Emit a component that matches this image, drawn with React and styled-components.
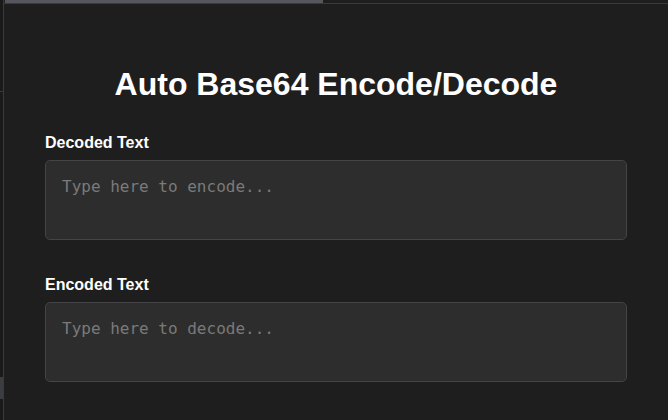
import React from "react";
import styled, { createGlobalStyle } from "styled-components";

const Global = createGlobalStyle`
  html, body { margin: 0; padding: 0; background: #1e1e1e; height: 100%; overflow: hidden; }
  #root { height: 100%; }
  * { box-sizing: border-box; }
`;

const Frame = styled.div`
  display: flex;
  height: 420px;
  width: 668px;
  background: #1e1e1e;
  font-family: "Liberation Sans", Arial, sans-serif;
  color: #ffffff;
`;

const Rail = styled.div`
  width: 4px;
  flex: none;
  background: #1a1a1a;
  border-right: 1px solid #3a3a3c;
  display: flex;
  flex-direction: column;
`;

const RailGap = styled.div`
  height: ${(p) => p.$h}px;
  flex: none;
  border-bottom: ${(p) => (p.$line ? "1px solid #3a3a3c" : "none")};
`;

const RailThumb = styled.div`
  height: 22px;
  flex: none;
  background: #3c3d40;
`;

const Main = styled.div`
  flex: 1;
  display: flex;
  flex-direction: column;
  min-width: 0;
`;

const TopStrip = styled.div`
  height: 4px;
  flex: none;
  display: flex;
  border-bottom: 1px solid #3a3a3c;
`;

const TopThumb = styled.div`
  width: 318px;
  margin-left: 1px;
  height: 3px;
  background: #56575c;
`;

const Content = styled.div`
  width: 582px;
  margin: 0 auto;
  padding-top: 62px;
`;

const Title = styled.h1`
  margin: 0 0 31px;
  font-size: 32px;
  font-weight: 700;
  text-align: center;
  color: #ffffff;
`;

const Field = styled.div`
  margin-bottom: ${(p) => p.$gap}px;
`;

const Label = styled.label`
  display: block;
  font-size: 16px;
  font-weight: 700;
  color: #ffffff;
  margin-bottom: 8px;
`;

const TextArea = styled.textarea`
  display: block;
  width: 100%;
  height: 80px;
  padding: 16px;
  background: #2d2d2d;
  border: 1px solid #444446;
  border-radius: 5px;
  color: #e0e0e0;
  font-family: "DejaVu Sans Mono", monospace;
  font-size: 16px;
  line-height: 1.2;
  resize: none;
  outline: none;
  &::placeholder {
    color: #7a7a7a;
  }
`;

export default function App() {
  return (
    <>
      <Global />
      <Frame>
        <Rail>
          <RailGap $h={92} $line />
          <RailGap $h={285} />
          <RailThumb />
        </Rail>
        <Main>
          <TopStrip>
            <TopThumb />
          </TopStrip>
          <Content>
            <Title>Auto Base64 Encode/Decode</Title>
            <Field $gap={36}>
              <Label htmlFor="decoded">Decoded Text</Label>
              <TextArea id="decoded" placeholder="Type here to encode..." />
            </Field>
            <Field $gap={0}>
              <Label htmlFor="encoded">Encoded Text</Label>
              <TextArea id="encoded" placeholder="Type here to decode..." />
            </Field>
          </Content>
        </Main>
      </Frame>
    </>
  );
}
